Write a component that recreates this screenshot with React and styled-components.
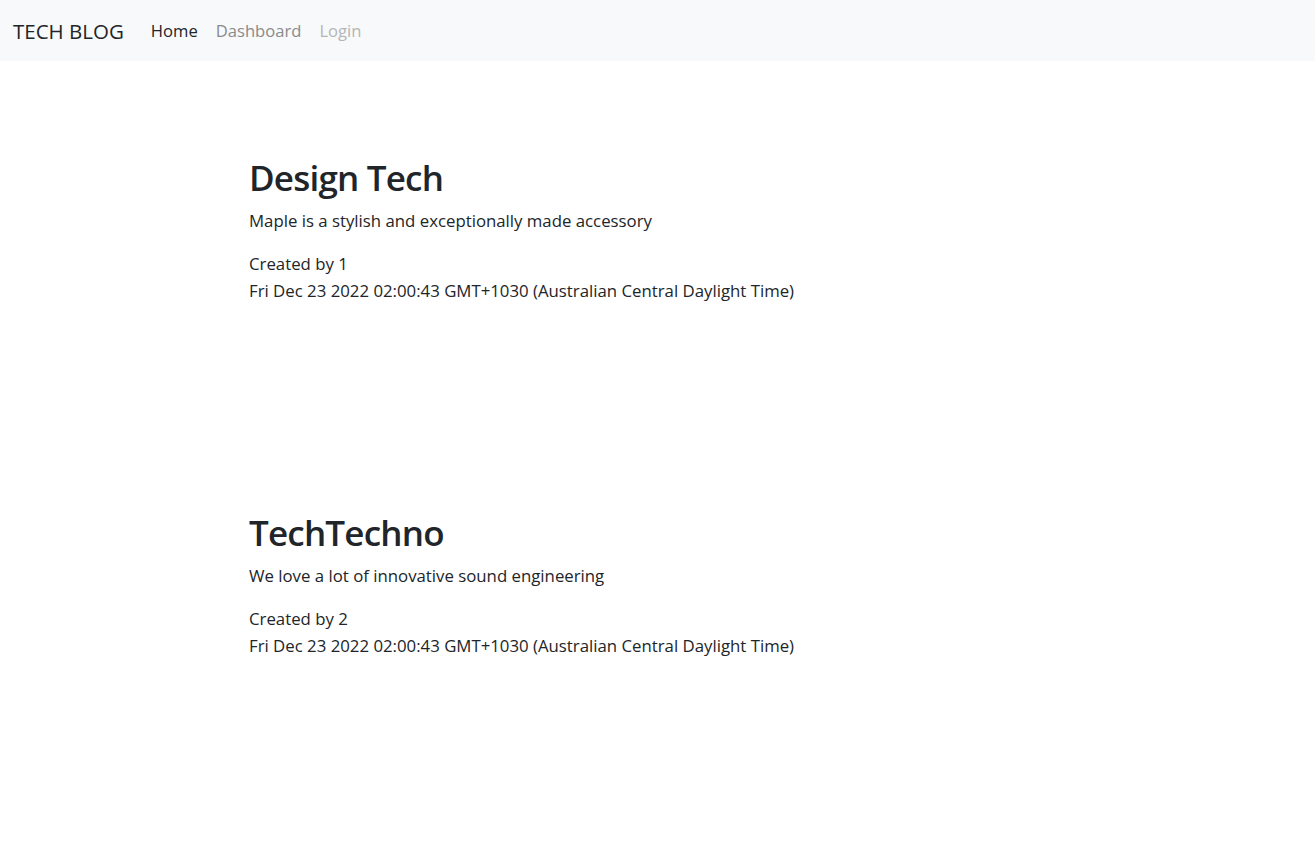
import React from "react";
import styled, { createGlobalStyle } from "styled-components";

const GlobalStyle = createGlobalStyle`
body {
  margin: 0;
  background: #fff;
  color: #212529;
  font-family: "Open Sans", "Noto Sans", sans-serif;
}
`;

const Navbar = styled.nav`
display: flex;
align-items: center;
height: 61px;
padding: 0 13px;
background: #f8f9fa;
`;

const Brand = styled.a`
font-size: 20.5px;
color: #212529;
margin-right: 27px;
text-decoration: none;
`;

const NavLink = styled.a`
font-size: 16.6px;
margin-right: 18px;
text-decoration: none;
color: ${(p) => (p.active ? "#212529" : p.disabled ? "#b4b5b6" : "#8a8b8c")};
`;

const Main = styled.main`
display: flex;
flex-direction: column;
gap: 208px;
padding: 96px 0 0 249px;
`;

const Post = styled.article`
display: flex;
flex-direction: column;
`;

const Title = styled.h1`
font-size: 35px;
font-weight: 600;
letter-spacing: -0.8px;
margin: 0 0 8px;
line-height: 1.2;
`;

const Content = styled.p`
font-size: 16.8px;
margin: 0 0 16px;
line-height: 27px;
`;

const Meta = styled.p`
font-size: 16.8px;
margin: 0;
line-height: 27px;
`;

const posts = [
  { id: 1, title: "Design Tech", content: "Maple is a stylish and exceptionally made accessory", author: 1 },
  { id: 2, title: "TechTechno", content: "We love a lot of innovative sound engineering", author: 2 },
];

const App = () => {
  return (
    <>
      <GlobalStyle />
      <Navbar>
        <Brand href="#">TECH BLOG</Brand>
        <NavLink href="#" active>Home</NavLink>
        <NavLink href="#">Dashboard</NavLink>
        <NavLink href="#" disabled>Login</NavLink>
      </Navbar>
      <Main>
        {posts.map((post) => (
          <Post key={post.id}>
            <Title>{post.title}</Title>
            <Content>{post.content}</Content>
            <Meta>Created by {post.author}</Meta>
            <Meta>Fri Dec 23 2022 02:00:43 GMT+1030 (Australian Central Daylight Time)</Meta>
          </Post>
        ))}
      </Main>
    </>
  );
};

export default App;
